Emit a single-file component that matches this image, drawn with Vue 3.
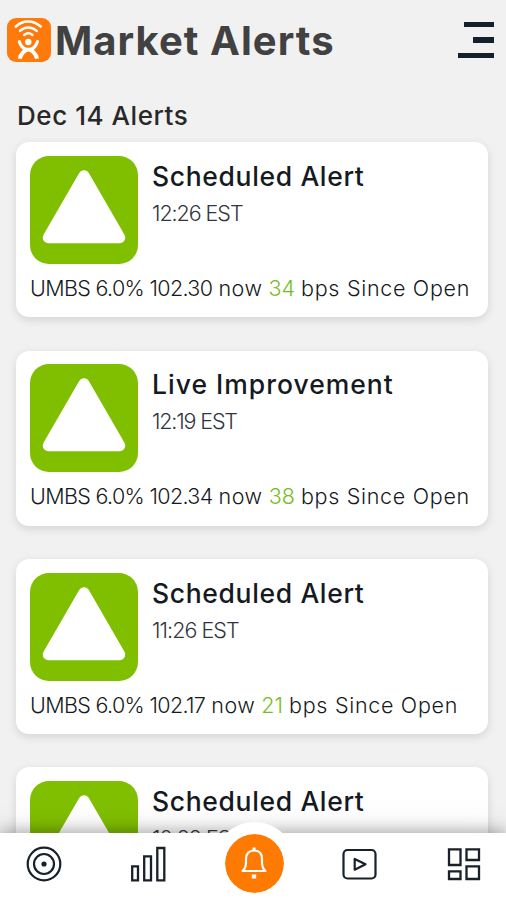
<script setup>
const alerts = [
  { title: 'Scheduled Alert', time: '12:26 EST', price: '102.30', bps: 34 },
  { title: 'Live Improvement', time: '12:19 EST', price: '102.34', bps: 38 },
  { title: 'Scheduled Alert', time: '11:26 EST', price: '102.17', bps: 21 },
  { title: 'Scheduled Alert', time: '10:22 EST', price: '', bps: 0 },
]
</script>

<template>
  <div class="screen">
    <header class="header">
      <svg class="logo" viewBox="0 0 44 44" fill="none" stroke="#fff" stroke-linecap="round">
        <rect width="44" height="44" rx="9" fill="#ff7a0a" stroke="none" />
        <path d="M8.800 8.500C16 1.800 26 1.800 33.700 8.500" stroke-width="2.600" />
        <path d="M13 12.900C18 8.500 24.500 8.500 29.700 12.900" stroke-width="2.500" />
        <path d="M17.200 17C19.800 14.800 23 14.800 25.500 17" stroke-width="2.400" />
        <circle cx="21.300" cy="24" r="3.200" fill="#fff" stroke="none" />
        <path d="M12.300 23.500C13.500 28 15.500 30 19 31.300M30.500 23.500C29.300 28 27.300 30 23.800 31.300" stroke-width="3" />
        <path d="M18.500 31C18 34 13.500 35 12.800 40.800M24.300 31C24.800 34 29.300 35 30 40.800" stroke-width="4" stroke-linecap="butt" />
        <path d="M17 29.700H26L25.500 35L21.400 33.500L17.500 35Z" fill="#fff" stroke="none" />
      </svg>
      <h1>Market Alerts</h1>
      <div class="menu"><i></i><i></i><i></i></div>
    </header>

    <main class="content">
      <h2>Dec 14 Alerts</h2>
      <div class="list">
        <article v-for="(a, i) in alerts" :key="i" class="card">
          <div class="top">
            <svg class="badge" viewBox="0 0 108 108">
              <rect width="108" height="108" rx="19" fill="#80bf00" />
              <path d="M54 20L89.500 81.500H18.500Z" fill="#fff" stroke="#fff" stroke-width="11.500" stroke-linejoin="round" />
            </svg>
            <div class="info">
              <h3 :class="{ live: a.title.startsWith('Live') }">{{ a.title }}</h3>
              <time>{{ a.time }}</time>
            </div>
          </div>
          <p v-if="a.price"><span class="quote">UMBS 6.0% {{ a.price }}</span> <span class="now">now</span> <b>{{ a.bps }}</b> <span class="since">bps Since Open</span></p>
        </article>
      </div>
    </main>

    <nav class="nav">
      <div class="item">
        <svg width="36" height="36" viewBox="0 0 36 36" fill="none" stroke="#18202a" stroke-width="2.200">
          <circle cx="18" cy="18" r="16.300" /><circle cx="18" cy="18" r="10" /><circle cx="18" cy="18" r="2.600" fill="#18202a" stroke="none" />
        </svg>
      </div>
      <div class="item">
        <svg width="36" height="36" viewBox="0 0 36 36" fill="none" stroke="#18202a" stroke-width="2.300">
          <path d="M1.200 20.300H7V34.300H1.200ZM13.200 10.300H20V34.300H13.200ZM26.300 2H33.300V34.300H26.300Z" />
        </svg>
      </div>
      <div class="item">
        <span class="bell">
          <svg width="30" height="36" viewBox="0 0 30 36" fill="none" stroke="#fff" stroke-width="2.200" stroke-linejoin="round">
            <path d="M3.500 26C6 24 7 22 7 17.500V14C7 8.500 10 5.500 15 5.500S23 8.500 23 14V17.500C23 22 24 24 26.500 26Z" />
            <path d="M15 2.500V5.500" stroke-width="3" />
            <path d="M12.800 31.500H17.200" stroke-width="4" />
          </svg>
        </span>
      </div>
      <div class="item">
        <svg width="36" height="32" viewBox="0 0 36 32" fill="none" stroke="#18202a" stroke-width="2.200" stroke-linejoin="round">
          <rect x="2.500" y="2" width="32" height="28.500" rx="4" /><path d="M13.700 10.900V21.700L24.500 16.300Z" />
        </svg>
      </div>
      <div class="item">
        <svg width="34" height="34" viewBox="0 0 34 34" fill="none" stroke="#18202a" stroke-width="2.300">
          <path d="M2 2.300H13.500V18H2ZM19.500 2.300H32V13H19.500ZM2 24.300H13.500V32H2ZM19.500 19.300H32V32H19.500Z" />
        </svg>
      </div>
    </nav>
  </div>
</template>

<style>
body { margin: 0; overflow: hidden; background: #f1f1f1; }
</style>

<style scoped>
.screen {
  width: 506px;
  height: 900px;
  overflow: hidden;
  display: flex;
  flex-direction: column;
  background: #f1f1f1;
  font-family: Inter, "Liberation Sans", sans-serif;
  color: #151a22;
}
h1, h2, h3, p { margin: 0; white-space: nowrap; }
.header {
  flex: none;
  height: 82px;
  box-sizing: border-box;
  display: flex;
  align-items: center;
  padding: 0 12px 2px 7px;
}
.logo { width: 44px; height: 44px; }
h1 {
  flex: 1;
  margin-left: 4px;
  padding-top: 2px;
  font-size: 40px;
  line-height: 48px;
  font-weight: 700;
  letter-spacing: 1.050px;
  color: #414141;
}
.menu { display: flex; flex-direction: column; align-items: flex-end; gap: 10px; }
.menu i { width: 30px; height: 5.500px; background: #14202c; }
.menu i:nth-child(2) { width: 21px; }
.menu i:nth-child(3) { width: 36.500px; }
.content { flex: 1; min-height: 0; overflow: hidden; padding: 18px 18px 0 16px; }
h2 {
  height: 42.300px;
  padding-left: 1px;
  font-size: 26px;
  line-height: 32px;
  font-weight: 500;
  letter-spacing: 0.550px;
  color: #282828;
  box-sizing: border-box;
}
.list { display: flex; flex-direction: column; gap: 33.400px; }
.card {
  flex: none;
  height: 175px;
  box-sizing: border-box;
  padding: 13.500px 14px;
  border-radius: 13px;
  background: #fff;
  box-shadow: 0 3px 10px rgba(0, 0, 0, 0.12);
}
.top { display: flex; gap: 14px; }
.badge { flex: none; width: 108px; height: 108px; }
.info { display: flex; flex-direction: column; padding-top: 3px; }
h3 { font-size: 26.500px; line-height: 34px; font-weight: 500; letter-spacing: 0.650px; }
h3.live { letter-spacing: 1px; }
time { margin-top: 6px; font-size: 21.500px; line-height: 28px; font-weight: 300; letter-spacing: -1.050px; color: #303540; }
.card:nth-child(2) time { letter-spacing: -1.150px; }
.card:nth-child(3) time { letter-spacing: -0.950px; }
p { margin-top: 10px; font-size: 21.500px; line-height: 28px; font-weight: 300; }
.quote { letter-spacing: -0.650px; }
.now { letter-spacing: 0.500px; }
.since { letter-spacing: 0.700px; }
p b { font-weight: 300; color: #76bd22; }
.nav {
  position: relative;
  flex: none;
  height: 67px;
  box-sizing: border-box;
  display: grid;
  grid-template-columns: repeat(5, 105.200px);
  justify-content: center;
  align-items: center;
  padding: 0 0 5px 2px;
  background: #fff;
  box-shadow: 0 -2px 15px rgba(0, 0, 0, 0.32), 0 -4px 40px rgba(0, 0, 0, 0.06);
}
.item { display: flex; justify-content: center; }
.bell {
  width: 59px;
  height: 59px;
  margin: -13px -12px -11px;
  border: 12px solid #fff;
  border-radius: 50%;
  background: #ff7a00;
  background-clip: padding-box;
  display: flex;
  align-items: center;
  justify-content: center;
}
</style>
